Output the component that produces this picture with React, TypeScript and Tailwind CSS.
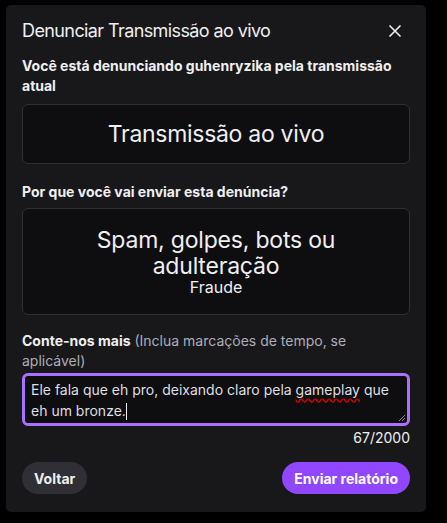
import React from "react";

export default function App() {
  return (
    <div
      className="w-[447px] h-[523px] bg-black pt-[5px] pl-[6px] overflow-hidden"
      style={{ fontFamily: "Inter, 'Noto Sans', sans-serif" }}
    >
      <div className="w-[420px] h-[507px] bg-[#18181b] rounded-[5px] px-4 pt-[11px] flex flex-col">
        <div className="flex items-center justify-between h-[30px]">
          <h1 className="text-[18px] leading-[24px] text-[#efeff1] font-normal tracking-[-0.6px]">
            Denunciar Transmissão ao vivo
          </h1>
          <button className="w-[30px] h-[30px] flex items-center justify-center">
            <svg width="14" height="14" viewBox="0 0 14 14">
              <path d="M1.5 1.5L12.5 12.5M12.5 1.5L1.5 12.5" stroke="#efeff1" strokeWidth="1.6" />
            </svg>
          </button>
        </div>

        <p className="mt-[10px] text-[14px] leading-[20px] font-bold text-[#efeff1]">
          Você está denunciando guhenryzika pela transmissão atual
        </p>

        <div className="mt-[8px] h-[60px] rounded-[6px] border border-[#2e2e33] bg-[#0e0e10] flex items-center justify-center">
          <span className="text-[23px] leading-[28px] text-[#efeff1] tracking-[-0.3px]">
            Transmissão ao vivo
          </span>
        </div>

        <p className="mt-[18px] text-[14px] leading-[20px] font-bold text-[#efeff1]">
          Por que você vai enviar esta denúncia?
        </p>

        <div className="mt-[6px] h-[107px] rounded-[6px] border border-[#2e2e33] bg-[#0e0e10] flex flex-col items-center pt-[18px]">
          <span className="text-[23px] leading-[26px] text-[#efeff1] text-center tracking-[-0.2px] w-[270px]">
            Spam, golpes, bots ou adulteração
          </span>
          <span className="text-[16px] leading-[20px] text-[#efeff1] -mt-[2px]">
            Fraude
          </span>
        </div>

        <p className="mt-[16px] text-[14px] leading-[20px] text-[#adadb8]">
          <span className="font-bold text-[#efeff1]">Conte-nos mais</span> (Inclua marcações de tempo, se aplicável)
        </p>

        <div className="relative mt-[2px] h-[53px] rounded-[6px] border-[3px] border-[#a970ff] bg-[#0e0e10] px-[6px] pt-[3px] text-[14px] leading-[21px] text-[#dedee3]">
          Ele fala que eh pro, deixando claro pela{" "}
          <span className="underline decoration-wavy decoration-[#d10000] underline-offset-[3px]">
            gameplay
          </span>{" "}
          que eh um bronze.
          <span className="inline-block w-px h-[17px] bg-[#efeff1] align-middle -mt-[2px]" />
          <svg
            className="absolute right-[1px] bottom-[1px]"
            width="8"
            height="8"
            viewBox="0 0 8 8"
          >
            <path d="M7 1L1 7M7 4L4 7" stroke="#8a8a93" strokeWidth="1" />
          </svg>
        </div>

        <div className="mt-[2px] text-right text-[14px] leading-[20px] text-[#efeff1]">
          67/2000
        </div>

        <div className="mt-[14px] flex items-center justify-between">
          <button className="h-[32px] px-[12px] rounded-full bg-[#2f2f35] text-[14px] font-bold text-[#efeff1]">
            Voltar
          </button>
          <button className="h-[32px] px-[12px] rounded-full bg-[#9147ff] text-[14px] font-bold text-white">
            Enviar relatório
          </button>
        </div>
      </div>
    </div>
  );
}
